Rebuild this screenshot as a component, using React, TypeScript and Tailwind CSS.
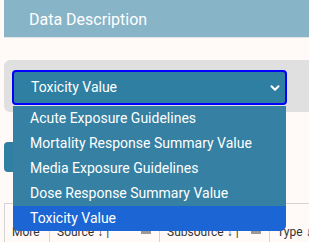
import { ChevronDown } from "lucide-react";

const options = [
  "Acute Exposure Guidelines",
  "Mortality Response Summary Value",
  "Media Exposure Guidelines",
  "Dose Response Summary Value",
  "Toxicity Value",
];

const selected = "Toxicity Value";

function HeaderCell({ label, width, filter }: { label: string; width: string; filter?: boolean }) {
  return (
    <div className={`${width} h-full shrink-0 border-r border-[#d4d4d4] flex items-end pb-[5px] pl-[7px] relative whitespace-nowrap`}>
      <span className="text-[12px] leading-none text-[#333]">{label}</span>
      {filter && <span className="absolute right-[8px] bottom-[9px] w-[10px] h-[3px] bg-[#9a9a9a]" />}
    </div>
  );
}

export default function App() {
  return (
    <div
      className="relative w-[309px] h-[242px] overflow-hidden bg-[#fffaf8] pl-1"
      style={{ fontFamily: "Roboto, 'Liberation Sans', sans-serif" }}
    >
      <div className="h-[38px] bg-[#88b4c8] border-b border-[#e4e4e4] flex items-center pl-[25px] pt-[3px]">
        <h2 className="text-white text-[16px]">Data Description</h2>
      </div>

      <div className="mt-[22px] h-[52px] bg-[#e0e0e0] rounded-l-md pl-2 pt-[10px]">
        <div className="w-[275px] h-[35px] border-2 border-[#0000ff] rounded-[4px] bg-[#2f7fa3] flex items-center justify-between pl-[17px] pr-[3px]">
          <span className="text-white text-[14px]">{selected}</span>
          <ChevronDown size={14} strokeWidth={3.5} color="white" />
        </div>
      </div>

      <div className="mt-[30px] h-[30px] w-[40px] bg-[#2f7fa3] rounded-l-[4px]" />

      <div className="mt-[31px] h-[40px] border-t border-l border-[#d4d4d4] flex">
        <HeaderCell label="More" width="w-[45px]" />
        <HeaderCell label="Source ↓ |" width="w-[110px]" filter />
        <HeaderCell label="Subsource ↓ |" width="w-[110px]" filter />
        <HeaderCell label="Type ↓" width="w-[40px]" />
      </div>

      <ul className="absolute left-[13px] top-[106px] w-[273px] bg-[#3580a3] rounded-b-md overflow-hidden">
        {options.map((o) => (
          <li
            key={o}
            className={`h-[25px] flex items-center pl-[17px] text-white text-[14px] ${
              o === selected ? "bg-[#1b66d4]" : ""
            }`}
          >
            {o}
          </li>
        ))}
      </ul>
    </div>
  );
}
